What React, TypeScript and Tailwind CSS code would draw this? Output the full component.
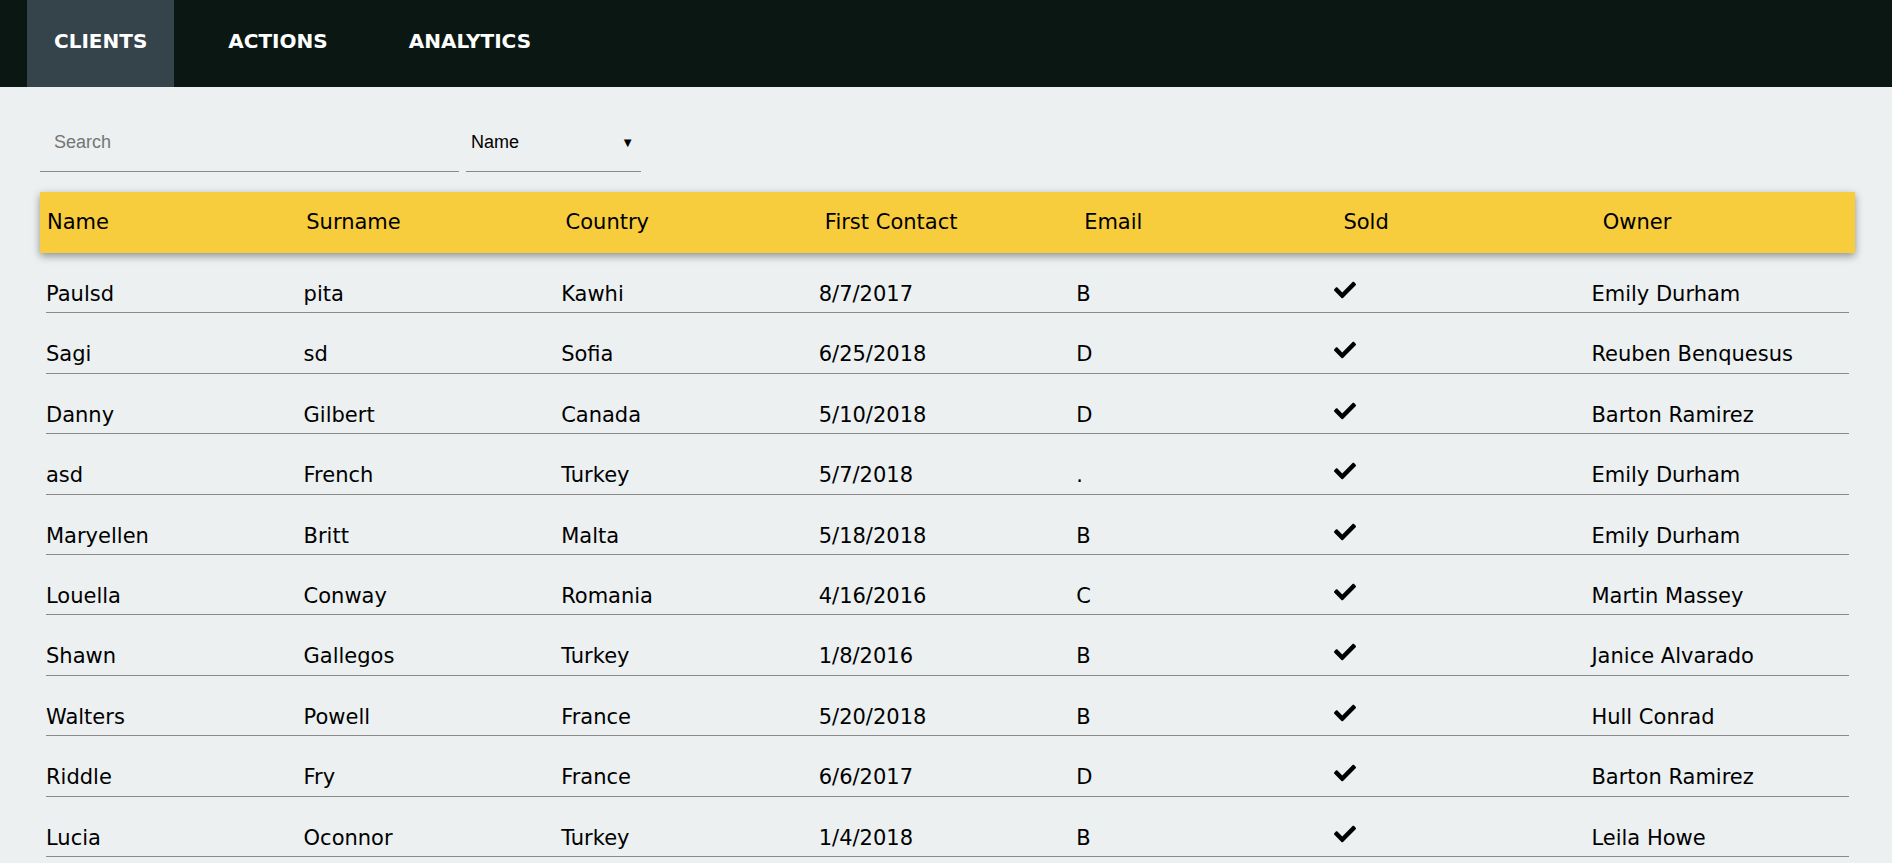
import { FaCheck } from 'react-icons/fa';

interface Client {
    name: string;
    surname: string;
    country: string;
    firstContact: string;
    email: string;
    sold: boolean;
    owner: string;
}

const clients: Client[] = [
    { name: 'Paulsd', surname: 'pita', country: 'Kawhi', firstContact: '8/7/2017', email: 'B', sold: true, owner: 'Emily Durham' },
    { name: 'Sagi', surname: 'sd', country: 'Sofia', firstContact: '6/25/2018', email: 'D', sold: true, owner: 'Reuben Benquesus' },
    { name: 'Danny', surname: 'Gilbert', country: 'Canada', firstContact: '5/10/2018', email: 'D', sold: true, owner: 'Barton Ramirez' },
    { name: 'asd', surname: 'French', country: 'Turkey', firstContact: '5/7/2018', email: '.', sold: true, owner: 'Emily Durham' },
    { name: 'Maryellen', surname: 'Britt', country: 'Malta', firstContact: '5/18/2018', email: 'B', sold: true, owner: 'Emily Durham' },
    { name: 'Louella', surname: 'Conway', country: 'Romania', firstContact: '4/16/2016', email: 'C', sold: true, owner: 'Martin Massey' },
    { name: 'Shawn', surname: 'Gallegos', country: 'Turkey', firstContact: '1/8/2016', email: 'B', sold: true, owner: 'Janice Alvarado' },
    { name: 'Walters', surname: 'Powell', country: 'France', firstContact: '5/20/2018', email: 'B', sold: true, owner: 'Hull Conrad' },
    { name: 'Riddle', surname: 'Fry', country: 'France', firstContact: '6/6/2017', email: 'D', sold: true, owner: 'Barton Ramirez' },
    { name: 'Lucia', surname: 'Oconnor', country: 'Turkey', firstContact: '1/4/2018', email: 'B', sold: true, owner: 'Leila Howe' },
];

const columns = ['Name', 'Surname', 'Country', 'First Contact', 'Email', 'Sold', 'Owner'];
const tabs = ['CLIENTS', 'ACTIONS', 'ANALYTICS'];

function NavBar() {
    return (
        <nav className="h-[87px] bg-[#0b1713] flex px-[27px] gap-[27px]">
            {tabs.map((tab, i) => (
                <div
                    key={tab}
                    className={`h-full flex items-center px-[27px] pb-[6px] text-white font-bold text-[20px] ${i === 0 ? 'bg-[#35434b]' : ''}`}
                >
                    {tab}
                </div>
            ))}
        </nav>
    );
}

function Filters() {
    return (
        <div className="flex gap-[7px] pt-[25px] font-['Liberation_Sans',Arial,sans-serif] text-[18px]">
            <div className="w-[419px] h-[60px] border-b border-[#8a8a8a] flex items-center pl-[14px] pt-[2px]">
                <input
                    placeholder="Search"
                    className="w-full bg-transparent outline-none placeholder:text-[#757575] text-black"
                />
            </div>
            <div className="w-[175px] h-[60px] border-b border-[#8a8a8a] flex items-center justify-between pl-[5px] pr-[7px] pt-[2px] text-black">
                <span>Name</span>
                <span className="text-[13px]">▼</span>
            </div>
        </div>
    );
}

function ClientsTable() {
    return (
        <div className="mt-[20px]">
            <div className="grid grid-cols-7 h-[61px] items-center bg-[#f7cd3d] shadow-[0_3px_8px_rgba(0,0,0,0.4)] text-[21px] text-black">
                {columns.map((col) => (
                    <div key={col} className="pl-[7px]">{col}</div>
                ))}
            </div>
            <div className="mx-[6px]">
                {clients.map((c, i) => (
                    <div
                        key={i}
                        className="grid grid-cols-7 h-[60.4px] pt-[29px] border-b border-[#8a8a8a] text-[21px] leading-[24px] text-black"
                    >
                        <div>{c.name}</div>
                        <div>{c.surname}</div>
                        <div>{c.country}</div>
                        <div>{c.firstContact}</div>
                        <div>{c.email}</div>
                        <div className="-mt-[3px]">{c.sold && <FaCheck size={22} />}</div>
                        <div>{c.owner}</div>
                    </div>
                ))}
            </div>
        </div>
    );
}

export default function App() {
    return (
        <div className="min-h-screen bg-[#ecf0f1] font-['DejaVu_Sans',sans-serif]">
            <NavBar />
            <main className="pl-[40px] pr-[37px]">
                <Filters />
                <ClientsTable />
            </main>
        </div>
    );
}
